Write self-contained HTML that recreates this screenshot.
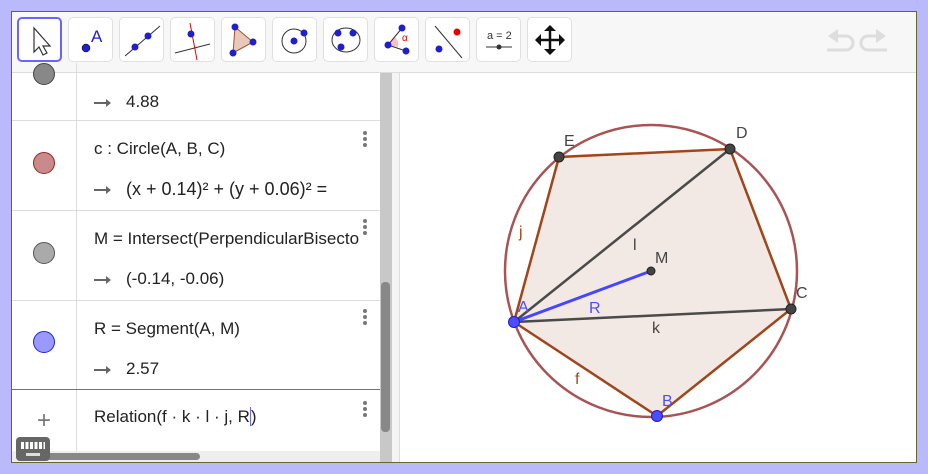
<!DOCTYPE html>
<html><head><meta charset="utf-8"><style>
*{margin:0;padding:0;box-sizing:border-box}
body{width:928px;height:474px;background:#b9b9fb;position:relative;overflow:hidden;font-family:"Liberation Sans","DejaVu Sans",sans-serif}
#app{position:absolute;left:11px;top:11px;width:906px;height:452px;background:#fff;border:1px solid #666633;overflow:hidden}
#tb{position:absolute;left:0;top:0;width:906px;height:61px;background:#f7f7f7;border-bottom:1px solid #ddd}
.btn{position:absolute;top:5px;width:45px;height:45px;background:#fff;border:1px solid #e0e0e0;border-radius:5px}
.btn svg{position:absolute;left:1px;top:0}
#alg{position:absolute;left:0;top:61px;width:368px;height:391px;background:#fff}
.row{position:absolute;left:0;width:368px;border-bottom:1px solid #ddd}
.mk{position:absolute;left:0;width:65px;height:100%;border-right:1px solid #ddd}
.dot{position:absolute;left:21px;width:22px;height:22px;border-radius:50%}
.t{position:absolute;left:82px;font-size:17px;color:#222;white-space:nowrap}
.ar{display:inline-block;width:16px;height:2px;background:#666;vertical-align:middle;margin-right:16px;position:relative}
.ar:after{content:"";position:absolute;right:-1px;top:-3px;border-left:5px solid #666;border-top:4px solid transparent;border-bottom:4px solid transparent}
.dots{position:absolute;left:351px;width:4px}
.dots i{display:block;width:4px;height:4px;border-radius:50%;background:#777;margin-bottom:2px}
</style></head><body>
<div id="app">
<div id="tb">
<div class="btn" style="left:5px;border:2px solid #6666ff"><svg width="42" height="44"><path d="M14 9 L14 33 L19 28 L23 36 L27 34 L23 27 L30 27 Z" fill="#fff" stroke="#333" stroke-width="1.2"/></svg></div>
<div class="btn" style="left:56px"><svg width="42" height="44"><circle cx="16" cy="30" r="4" fill="#1f1fcc" stroke="#000" stroke-width=".5"/><text x="21" y="24" font-size="17" fill="#1f1fcc" font-family="Liberation Sans">A</text></svg></div>
<div class="btn" style="left:107px"><svg width="42" height="44"><line x1="4" y1="38" x2="39" y2="8" stroke="#333" stroke-width="1"/><circle cx="14" cy="29" r="3.5" fill="#1f1fcc"/><circle cx="27" cy="18" r="3.5" fill="#1f1fcc"/></svg></div>
<div class="btn" style="left:158px"><svg width="42" height="44"><line x1="3" y1="35" x2="38" y2="26" stroke="#333"/><line x1="18" y1="5" x2="25" y2="42" stroke="#e00"/><circle cx="19" cy="16" r="3.5" fill="#1f1fcc"/></svg></div>
<div class="btn" style="left:209px"><svg width="42" height="44"><path d="M12 9 L30 24 L10 35 Z" fill="#e8c8b8" stroke="#a0522d"/><circle cx="12" cy="9" r="3.5" fill="#1f1fcc"/><circle cx="30" cy="24" r="3.5" fill="#1f1fcc"/><circle cx="10" cy="35" r="3.5" fill="#1f1fcc"/></svg></div>
<div class="btn" style="left:260px"><svg width="42" height="44"><circle cx="20" cy="23" r="12" fill="none" stroke="#333"/><circle cx="20" cy="23" r="3.5" fill="#1f1fcc"/><circle cx="30" cy="15" r="3.5" fill="#1f1fcc"/></svg></div>
<div class="btn" style="left:311px"><svg width="42" height="44"><ellipse cx="21" cy="22" rx="14" ry="12" fill="none" stroke="#333"/><circle cx="13" cy="15" r="3.5" fill="#1f1fcc"/><circle cx="28" cy="15" r="3.5" fill="#1f1fcc"/><circle cx="16" cy="29" r="3.5" fill="#1f1fcc"/></svg></div>
<div class="btn" style="left:362px"><svg width="42" height="44"><path d="M12 27 L22 29 A10 10 0 0 0 19 19 Z" fill="#f8c0c0"/><line x1="12" y1="27" x2="26" y2="10" stroke="#333"/><line x1="12" y1="27" x2="30" y2="33" stroke="#333"/><circle cx="12" cy="27" r="3.5" fill="#1f1fcc"/><circle cx="26" cy="10" r="3.5" fill="#1f1fcc"/><circle cx="30" cy="33" r="3.5" fill="#1f1fcc"/><text x="26" y="23" font-size="10" fill="#e00">α</text></svg></div>
<div class="btn" style="left:413px"><svg width="42" height="44"><line x1="8" y1="8" x2="35" y2="40" stroke="#333"/><circle cx="30" cy="14" r="3.5" fill="#e00"/><circle cx="12" cy="31" r="3.5" fill="#1f1fcc"/></svg></div>
<div class="btn" style="left:464px"><svg width="42" height="44"><text x="9" y="21" font-size="11" fill="#333" font-family="Liberation Sans">a = 2</text><line x1="8" y1="29" x2="34" y2="29" stroke="#333"/><circle cx="21" cy="29" r="2.5" fill="#333"/></svg></div>
<div class="btn" style="left:515px"><svg width="42" height="44"><path d="M21 8 L21 36 M7 22 L35 22" stroke="#111" stroke-width="2.5"/><path d="M15 13 L21 7 L27 13Z M15 31 L21 37 L27 31Z M12 16 L6 22 L12 28Z M30 16 L36 22 L30 28Z" fill="#111"/></svg></div>
<svg style="position:absolute;left:810px;top:15px" width="80" height="30"><path d="M6 9 L16 2 L16 16 Z" fill="#ddd"/><path d="M14 9 H24 A7 7 0 0 1 24 23 H5" fill="none" stroke="#ddd" stroke-width="3"/><path d="M64 9 L54 2 L54 16 Z" fill="#ddd"/><path d="M56 9 H46 A7 7 0 0 0 46 23 H65" fill="none" stroke="#ddd" stroke-width="3"/></svg>
</div>
<div id="alg">
<div class="row" style="top:-10px;height:58px"><div class="mk"><div class="dot" style="top:0;background:#888;border:1px solid #444"></div></div><div class="t" style="top:29px"><span class="ar"></span>4.88</div></div>
<div class="row" style="top:48px;height:90px"><div class="mk"><div class="dot" style="top:31px;background:#c88a8a;border:1px solid #992222"></div></div><div class="t" style="top:18px">c : Circle(A, B, C)</div><div class="t" style="top:58px;font-size:18px"><span class="ar"></span>(x + 0.14)² + (y + 0.06)² =</div><div class="dots" style="top:10px"><i></i><i></i><i></i></div></div>
<div class="row" style="top:138px;height:90px"><div class="mk"><div class="dot" style="top:31px;background:#aaa;border:1px solid #555"></div></div><div class="t" style="top:18px">M = Intersect(PerpendicularBisecto</div><div class="t" style="top:58px"><span class="ar"></span>(-0.14, -0.06)</div><div class="dots" style="top:8px"><i></i><i></i><i></i></div></div>
<div class="row" style="top:228px;height:89px;border-bottom:1px solid #6666dd"><div class="mk"><div class="dot" style="top:30px;background:#9999ff;border:1px solid #2222dd"></div></div><div class="t" style="top:18px">R = Segment(A, M)</div><div class="t" style="top:58px"><span class="ar"></span>2.57</div><div class="dots" style="top:8px"><i></i><i></i><i></i></div></div>
<div class="row" style="top:317px;height:74px;border:none"><div class="mk"><div style="position:absolute;left:25px;top:17px;font-size:24px;color:#777">+</div></div><div class="t" style="top:17px">Relation(f · k · l · j, R<span style="border-left:1px solid #66f"></span>)</div><div class="dots" style="top:11px"><i></i><i></i><i></i></div></div>
<div style="position:absolute;left:0;top:378px;width:368px;height:13px;background:#eee"></div>
<div style="position:absolute;left:35px;top:380px;width:153px;height:7px;border-radius:4px;background:#888"></div>
<div style="position:absolute;left:4px;top:364px;width:34px;height:24px;background:#666;border-radius:4px"><div style="position:absolute;left:5px;top:5px;width:24px;height:7px;background:repeating-linear-gradient(90deg,#fff 0 3px,transparent 3px 4.5px)"></div><div style="position:absolute;left:10px;top:16px;width:14px;height:3px;background:#ddd"></div></div>
</div>
<div style="position:absolute;left:368px;top:61px;width:12px;height:391px;background:#c8c8c8"></div>
<div style="position:absolute;left:369px;top:270px;width:9px;height:150px;background:#888;border-radius:4px"></div>
<div style="position:absolute;left:380px;top:61px;width:8px;height:391px;background:#f4f4f4;border-right:1px solid #ddd"></div>
<svg style="position:absolute;left:-11px;top:-11px" width="928" height="474" font-family="Liberation Sans,DejaVu Sans,sans-serif">
<polygon points="513,321 656,415 790,308 729,148 558,156" fill="#a0522d" fill-opacity=".13"/>
<circle cx="650" cy="270" r="146" fill="none" stroke="#a95454" stroke-width="2.5"/>
<polyline points="513,321 656,415 790,308 729,148 558,156 513,321" fill="none" stroke="#a0461a" stroke-width="2.5"/>
<line x1="513" y1="321" x2="729" y2="148" stroke="#4a4a4a" stroke-width="2.5"/>
<line x1="513" y1="321" x2="790" y2="308" stroke="#4a4a4a" stroke-width="2.5"/>
<line x1="513" y1="321" x2="650" y2="270" stroke="#4646ff" stroke-width="3"/>
<g fill="#444" stroke="#222" stroke-width="1"><circle cx="558" cy="156" r="5"/><circle cx="729" cy="148" r="5"/><circle cx="790" cy="308" r="5"/><circle cx="650" cy="270" r="4"/></g>
<g fill="#4d4dff" stroke="#1a1acc" stroke-width="1"><circle cx="513" cy="321" r="5.5"/><circle cx="656" cy="415" r="5.5"/></g>
<g font-size="16" fill="#444"><text x="563" y="145">E</text><text x="735" y="137">D</text><text x="795" y="297">C</text><text x="654" y="262">M</text><text x="632" y="249">l</text><text x="651" y="332">k</text></g>
<g font-size="16" fill="#4d4dff"><text x="517" y="311">A</text><text x="661" y="405">B</text><text x="588" y="312">R</text></g>
<g font-size="16" fill="#a0461a"><text x="518" y="236">j</text><text x="574" y="383">f</text></g>
</svg>
</div>
</body></html>
